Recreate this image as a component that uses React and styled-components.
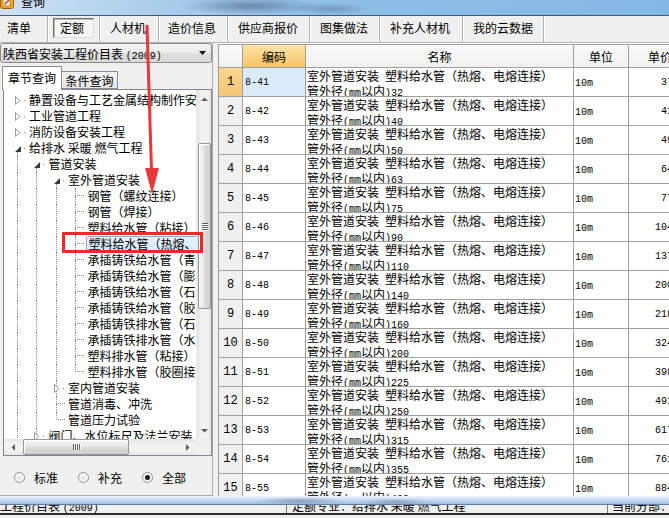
import React from 'react';
import styled, { createGlobalStyle, css } from 'styled-components';

const CJK = '"Noto Sans CJK SC", "Liberation Sans", sans-serif';
const MONO = '"Liberation Mono", "Noto Sans CJK SC", monospace';
const GRID = '#a0a0a0';

const GlobalStyle = createGlobalStyle`
  html, body { margin: 0; padding: 0; }
  body {
    width: 669px;
    height: 518px;
    overflow: hidden;
    background: #f0f0f0;
    font-family: ${CJK};
    font-size: 12px;
    color: #000;
  }
  * { box-sizing: border-box; }
`;

const Window = styled.div`
  position: relative;
  width: 669px;
  height: 518px;
  overflow: hidden;
  display: flex;
  flex-direction: column;
  background: #f0f0f0;
`;

/* title bar (only the lower part is on screen) */
const TitleBar = styled.div`
  flex: none;
  height: 16px;
  border-bottom: 1px solid #3d5b7e;
  display: flex;
  align-items: flex-start;
  gap: 7px;
  overflow: hidden;
  background:
    radial-gradient(ellipse 70px 9px at 250px 6px, rgba(45, 65, 95, .45), rgba(45, 65, 95, 0)),
    radial-gradient(ellipse 40px 6px at 330px 9px, rgba(45, 65, 95, .3), rgba(45, 65, 95, 0)),
    linear-gradient(to right, #cfe2f3 0%, #abcfec 22%, #90bee7 50%, #84b8e5 100%);
`;

const TitleIcon = styled.svg`
  flex: none;
  margin-top: -5px;
`;

const TitleText = styled.span`
  line-height: 12px;
  margin-top: -4px;
  font-size: 12px;
`;

/* main tab strip */
const TabBar = styled.div`
  flex: none;
  height: 27px;
  display: flex;
  border-bottom: 1px solid #b5b5b5;
`;

const TopTab = styled.div`
  flex: none;
  width: ${p => p.$w}px;
  padding: 0 0 3px ${p => p.$pad}px;
  border-right: 1px solid #b3b3b3;
  box-shadow: 1px 0 0 #fff;
  display: flex;
  align-items: center;
  white-space: nowrap;
  font-size: 12px;
`;

const PressedBox = styled.span`
  height: 20px;
  width: 41px;
  padding-left: 6px;
  display: flex;
  align-items: center;
  border: 1px solid;
  border-color: #6f6f6f #dcdcdc #dcdcdc #6f6f6f;
  box-shadow: inset 1px 1px 0 #b9b9b9;
  background: #f6f6f6;
`;

const Main = styled.div`
  flex: none;
  height: 453px;
  display: flex;
`;

/* left side: chapter tree */
const LeftPanel = styled.div`
  flex: none;
  width: 213px;
  border-right: 1px solid #a9a9a9;
  border-bottom: 1px solid #a9a9a9;
  display: flex;
  flex-direction: column;
`;

const Combo = styled.div`
  flex: none;
  height: 20px;
  border: 1px solid #8b8b8b;
  border-radius: 3px;
  background: linear-gradient(#f4f4f4, #ebebeb 50%, #dedede 51%, #d9d9d9);
  display: flex;
  align-items: center;
  justify-content: space-between;
  padding: 0 5px 0 2px;
  white-space: nowrap;
`;

const Ascii = styled.span`
  font-family: "Liberation Mono", monospace;
  font-size: 10px;
`;

const QueryTabs = styled.div`
  flex: none;
  height: 26px;
  display: flex;
  align-items: flex-end;
  padding-left: 2px;
`;

const QueryTab = styled.div`
  position: relative;
  z-index: 1;
  width: ${p => (p.$active ? 60 : 56)}px;
  height: ${p => (p.$active ? 24 : 18)}px;
  margin-bottom: ${p => (p.$active ? -1 : 0)}px;
  border: 1px solid #898c95;
  border-bottom: ${p => (p.$active ? 'none' : '1px solid #898c95')};
  border-left: ${p => (p.$active ? '1px solid #898c95' : 'none')};
  background: ${p => (p.$active ? '#fff' : 'linear-gradient(#f3f3f3, #e5e5e5)')};
  display: flex;
  align-items: center;
  justify-content: center;
  padding-bottom: ${p => (p.$active ? 3 : 0)}px;
  font-size: 12px;
`;

const TreeBox = styled.div`
  flex: none;
  margin-left: 3px;
  width: 209px;
  height: 367px;
  border: 1px solid #828790;
  background: #fff;
  display: grid;
  grid-template-columns: 1fr 15px;
  grid-template-rows: 1fr 16px;
`;

const TreeList = styled.div`
  overflow: hidden;
  padding: 2px 0 0 3.5px;
`;

const TreeRow = styled.div`
  height: 16px;
  display: flex;
  white-space: nowrap;
`;

const Guide = styled.span`
  flex: none;
  width: 19.5px;
  display: grid;
`;

const GuideLine = styled.span`
  grid-area: 1 / 1;
  margin-left: 9px;
  margin-top: ${p => p.$top || 0}px;
  height: ${p => (p.$half ? '8px' : 'auto')};
  width: ${p => (p.$hook ? 9 : 0)}px;
  border-left: 1px dotted #8e8e8e;
  ${p => p.$hook && css`border-bottom: 1px dotted #8e8e8e;`}
`;

const Expander = styled.svg`
  grid-area: 1 / 1;
  align-self: start;
  margin: ${p => (p.$open ? '6px 0 0 7px' : '4px 0 0 7px')};
  background: transparent;
`;

const ExpDot = styled.span`
  grid-area: 1 / 1;
  align-self: start;
  margin: 8px 0 0 16px;
  width: 1px;
  height: 1px;
  background: #8e8e8e;
`;

const TreeText = styled.span`
  line-height: 16px;
  font-size: 12px;
  padding: 0 2px;
  ${p => p.$selected && css`
    line-height: 14px;
    height: 16px;
    background: linear-gradient(#e9f3fd, #d7e8fb);
    border: 1px solid #84acdd;
    border-radius: 2px;
  `}
`;

/* scroll bars */
const VScroll = styled.div`
  display: flex;
  flex-direction: column;
  background: linear-gradient(to right, #e3e3e3, #f2f2f2 30%, #f2f2f2 70%, #e6e6e6);
  border-left: 1px solid #ececec;
`;

const HScroll = styled.div`
  display: flex;
  align-items: stretch;
  background: linear-gradient(#e3e3e3, #f2f2f2 30%, #f2f2f2 70%, #e6e6e6);
`;

const Corner = styled.div`
  background: #f0f0f0;
`;

const ArrowBtn = styled.div`
  flex: none;
  width: ${p => (p.$h ? 17 : 'auto')}px;
  height: ${p => (p.$h ? 'auto' : '17px')};
  display: flex;
  align-items: center;
  justify-content: center;
`;

const Track = styled.div`
  flex: 1;
  display: flex;
  flex-direction: ${p => (p.$h ? 'row' : 'column')};
`;

const Thumb = styled.div`
  flex: none;
  ${p => (p.$h
    ? css`
      margin: 0 0 0 2px;
      width: 106px;
      background: linear-gradient(#f5f5f5, #e9e9e9 45%, #d9d9d9 55%, #cfcfcf);
    `
    : css`
      margin: 36px 0 0 1px;
      height: 166px;
      width: 13px;
      background: linear-gradient(to right, #f5f5f5, #e9e9e9 45%, #d9d9d9 55%, #cfcfcf);
    `)}
  border: 1px solid #979797;
  border-radius: 2px;
  box-shadow: inset 1px 1px 0 #fff;
  display: flex;
  flex-direction: ${p => (p.$h ? 'row' : 'column')};
  align-items: center;
  justify-content: center;
  gap: 1px;
`;

const Grip = styled.span`
  width: ${p => (p.$h ? 1 : 6)}px;
  height: ${p => (p.$h ? 6 : 1)}px;
  background: #5f5f5f;
  box-shadow: ${p => (p.$h ? '1px 0 0 #fff' : '0 1px 0 #fff')};
`;

/* radio row */
const RadioRow = styled.div`
  flex: 1;
  display: flex;
  align-items: center;
  padding: 3px 0 0 14px;
  gap: 20px;
`;

const RadioItem = styled.label`
  display: flex;
  align-items: center;
  gap: 9px;
  font-size: 12px;
`;

const RadioDot = styled.span`
  width: 11px;
  height: 11px;
  border-radius: 50%;
  border: 1px solid #8e8f8f;
  background: radial-gradient(circle, #e7e7e7 0, #f8f8f8 60%, #fff 100%);
  display: flex;
  align-items: center;
  justify-content: center;
  &::after {
    content: '';
    width: 5px;
    height: 5px;
    border-radius: 50%;
    background: ${p => (p.$checked ? '#1b1b1b' : 'transparent')};
  }
`;

/* right side: quota table */
const RightPanel = styled.div`
  flex: 1;
  margin-left: 5px;
  padding-top: 1px;
  overflow: hidden;
  background: #fff;
`;

const Table = styled.div`
  display: grid;
  grid-template-columns: 24px 63px 268px 55px 63px;
  grid-template-rows: 23px;
  grid-auto-rows: 29px;
  width: max-content;
  border-top: 1px solid ${GRID};
  border-left: 1px solid ${GRID};
`;

const Cell = styled.div`
  border-right: 1px solid ${GRID};
  border-bottom: 1px solid ${GRID};
  overflow: hidden;
  white-space: nowrap;
`;

const HeadCell = styled(Cell)`
  display: flex;
  align-items: center;
  justify-content: center;
  font-size: 12px;
  background: ${p => (p.$hot ? 'linear-gradient(#fde2a6, #f6c466)' : 'linear-gradient(#fafafa, #f0f0f0)')};
`;

const NumCell = styled(Cell)`
  display: flex;
  align-items: center;
  justify-content: center;
  font-family: ${MONO};
  font-size: 12px;
  background: ${p => (p.$hot ? 'linear-gradient(#fcd792, #f7c574)' : '#f0f0f0')};
`;

const CodeCell = styled(Cell)`
  display: flex;
  align-items: center;
  padding-left: 2px;
  font-family: ${MONO};
  font-size: 10px;
  background: ${p => (p.$hot ? '#dcebfc' : '#fff')};
`;

const NameCell = styled(Cell)`
  padding: 2px 0 0 1px;
  font-size: 12px;
  line-height: 12px;
`;

const UnitCell = styled(Cell)`
  display: flex;
  align-items: center;
  padding: 3px 0 0 1px;
  font-family: ${MONO};
  font-size: 10px;
`;

const PriceCell = styled(Cell)`
  display: flex;
  align-items: center;
  justify-content: flex-end;
  padding: 0 0 0 0;
  font-family: ${MONO};
  font-size: 10px;
`;

/* status bar */
const StatusBar = styled.div`
  flex: none;
  height: 22px;
  display: flex;
  flex-direction: column;
`;

const StatusStrip = styled.div`
  flex: none;
  height: 9px;
  border-bottom: 1px solid #5d7ea8;
  background:
    radial-gradient(ellipse 45px 4px at 300px 5px, rgba(40, 60, 90, .35), rgba(40, 60, 90, 0)),
    radial-gradient(ellipse 35px 4px at 395px 6px, rgba(40, 60, 90, .3), rgba(40, 60, 90, 0)),
    linear-gradient(#eef5fc, #c9ddf2 45%, #9fc2e8);
`;

const StatusRow = styled.div`
  flex: none;
  height: 10px;
  overflow: hidden;
  display: flex;
  background: #f0f0f0;
  border-bottom: 2px solid #2e2e2e;
`;

const StatusItem = styled.div`
  flex: none;
  width: ${p => p.$w}px;
  padding-left: ${p => p.$pad || 0}px;
  border-right: 1px solid #7a7a7a;
  white-space: nowrap;
  line-height: 12px;
  font-size: 12px;
  & > span { display: block; margin-top: -5px; }
`;

/* red annotations drawn over the window */
const Overlay = styled.svg`
  position: absolute;
  left: 0;
  top: 0;
  pointer-events: none;
`;

const topTabs = [
  { label: '清单', w: 48, pad: 7 },
  { label: '定额', w: 52, pad: 5, active: true },
  { label: '人材机', w: 59, pad: 10 },
  { label: '造价信息', w: 69, pad: 9 },
  { label: '供应商报价', w: 82, pad: 10 },
  { label: '图集做法', w: 70, pad: 10 },
  { label: '补充人材机', w: 83, pad: 10 },
  { label: '我的云数据', w: 81, pad: 10 },
];

const leaf3 = [
  '钢管（螺纹连接）',
  '钢管（焊接）',
  '塑料给水管（粘接）',
  '塑料给水管（热熔、电熔连接）',
  '承插铸铁给水管（青铅接口）',
  '承插铸铁给水管（膨胀水泥接口）',
  '承插铸铁给水管（石棉水泥接口）',
  '承插铸铁给水管（胶圈接口）',
  '承插铸铁排水管（石棉水泥接口）',
  '承插铸铁排水管（水泥接口）',
  '塑料排水管（粘接）',
  '塑料排水管（胶圈接口）',
];

const treeItems = [
  { text: '静置设备与工艺金属结构制作安装工程', guides: [], node: 'closed' },
  { text: '工业管道工程', guides: [], node: 'closed' },
  { text: '消防设备安装工程', guides: [], node: 'closed' },
  { text: '给排水 采暖 燃气工程', guides: [], node: 'open', more: true },
  { text: '管道安装', guides: [1], node: 'open', more: true },
  { text: '室外管道安装', guides: [1, 1], node: 'open', more: true },
  ...leaf3.map((text, i) => ({
    text,
    guides: [1, 1, 1],
    node: 'leaf',
    more: i < leaf3.length - 1,
    selected: i === 3,
  })),
  { text: '室内管道安装', guides: [1, 1], node: 'closed', more: true },
  { text: '管道消毒、冲洗', guides: [1, 1], node: 'leaf', more: true },
  { text: '管道压力试验', guides: [1, 1], node: 'leaf', more: false },
  { text: '阀门、水位标尺及法兰安装', guides: [1], node: 'closed', more: true },
];

const sizes = [32, 40, 50, 63, 75, 90, 110, 140, 160, 200, 225, 250, 315, 355, 400];
const prices = ['377.5', '418.2', '494.6', '643.8', '778.1', '1042.3', '1375.9', '2003.4',
  '2186.5', '3241.0', '3980.6', '4912.3', '6175.2', '7612.4', '8847.9'];

function TreeNode({ item }) {
  return (
    <TreeRow>
      {item.guides.map((g, i) => (
        <Guide key={i}>{g ? <GuideLine /> : null}</Guide>
      ))}
      <Guide>
        {item.node === 'leaf' && (
          <>
            <GuideLine $half $hook />
            {item.more && <GuideLine $top={8} />}
          </>
        )}
        {item.node === 'open' && (
          <>
            {item.more && <GuideLine $top={12} />}
            <Expander $open width="6" height="6" viewBox="0 0 6 6">
              <path d="M6 0 L6 6 L0 6 Z" fill="#3a3a3a" />
            </Expander>
            <ExpDot />
          </>
        )}
        {item.node === 'closed' && (
          <>
            {item.more && item.guides.length > 0 && <GuideLine />}
            <Expander width="6" height="9" viewBox="0 0 6 9">
              <path d="M0.5 0.5 L5 4.5 L0.5 8.5 Z" fill="#fff" stroke="#9a9a9a" strokeWidth="1" />
            </Expander>
            <ExpDot />
          </>
        )}
      </Guide>
      <TreeText $selected={item.selected}>{item.text}</TreeText>
    </TreeRow>
  );
}

function ArrowGlyph({ dir }) {
  const paths = {
    up: 'M0 4 L3.5 0.5 L7 4 Z',
    down: 'M0 0 L3.5 3.5 L7 0 Z',
    left: 'M4 0 L0.5 3.5 L4 7 Z',
    right: 'M0 0 L3.5 3.5 L0 7 Z',
  };
  const vertical = dir === 'up' || dir === 'down';
  return (
    <svg width={vertical ? 7 : 4} height={vertical ? 4 : 7} viewBox={vertical ? '0 0 7 4' : '0 0 4 7'}>
      <path d={paths[dir]} fill="#606060" />
    </svg>
  );
}

export default function App() {
  return (
    <>
      <GlobalStyle />
      <Window>
        <TitleBar>
          <TitleIcon width="14" height="14" viewBox="0 0 14 14">
            <rect x="0.5" y="0.5" width="13" height="13" rx="2" fill="#f4a623" stroke="#a0600c" />
            <rect x="3" y="3" width="7" height="8" fill="#fff8e0" stroke="#b7791f" strokeWidth="0.8" />
            <path d="M4.5 9.5 L10.5 3.5" stroke="#c0392b" strokeWidth="1.4" />
          </TitleIcon>
          <TitleText>查询</TitleText>
        </TitleBar>

        <TabBar>
          {topTabs.map(t => (
            <TopTab key={t.label} $w={t.w} $pad={t.pad}>
              {t.active ? <PressedBox>{t.label}</PressedBox> : t.label}
            </TopTab>
          ))}
        </TabBar>

        <Main>
          <LeftPanel>
            <Combo>
              <span>陕西省安装工程价目表 <Ascii>(2009)</Ascii></span>
              <svg width="7" height="4" viewBox="0 0 7 4">
                <path d="M0 0 L7 0 L3.5 4 Z" fill="#111" />
              </svg>
            </Combo>
            <QueryTabs>
              <QueryTab $active>章节查询</QueryTab>
              <QueryTab>条件查询</QueryTab>
            </QueryTabs>
            <TreeBox>
              <TreeList>
                {treeItems.map(item => (
                  <TreeNode key={item.text} item={item} />
                ))}
              </TreeList>
              <VScroll>
                <ArrowBtn><ArrowGlyph dir="up" /></ArrowBtn>
                <Track>
                  <Thumb>
                    <Grip /><Grip /><Grip /><Grip />
                  </Thumb>
                </Track>
                <ArrowBtn><ArrowGlyph dir="down" /></ArrowBtn>
              </VScroll>
              <HScroll>
                <ArrowBtn $h><ArrowGlyph dir="left" /></ArrowBtn>
                <Track $h>
                  <Thumb $h>
                    <Grip $h /><Grip $h /><Grip $h /><Grip $h />
                  </Thumb>
                </Track>
                <ArrowBtn $h><ArrowGlyph dir="right" /></ArrowBtn>
              </HScroll>
              <Corner />
            </TreeBox>
            <RadioRow>
              <RadioItem><RadioDot />标准</RadioItem>
              <RadioItem><RadioDot />补充</RadioItem>
              <RadioItem><RadioDot $checked />全部</RadioItem>
            </RadioRow>
          </LeftPanel>

          <RightPanel>
            <Table>
              <HeadCell />
              <HeadCell $hot>编码</HeadCell>
              <HeadCell>名称</HeadCell>
              <HeadCell>单位</HeadCell>
              <HeadCell>单价</HeadCell>
              {sizes.map((size, i) => (
                <React.Fragment key={size}>
                  <NumCell $hot={i === 0}>{i + 1}</NumCell>
                  <CodeCell $hot={i === 0}>8-{41 + i}</CodeCell>
                  <NameCell>
                    室外管道安装<Ascii> </Ascii>塑料给水管（热熔、电熔连接）
                    <br />
                    管外径<Ascii>(mm</Ascii>以内<Ascii>){size}</Ascii>
                  </NameCell>
                  <UnitCell>10m</UnitCell>
                  <PriceCell>{prices[i]}</PriceCell>
                </React.Fragment>
              ))}
            </Table>
          </RightPanel>
        </Main>

        <StatusBar>
          <StatusStrip />
          <StatusRow>
            <StatusItem $w={287}><span>工程价目表 <Ascii>(2009)</Ascii></span></StatusItem>
            <StatusItem $w={321} $pad={5}><span>定额专业：给排水 采暖 燃气工程</span></StatusItem>
            <StatusItem $w={70} $pad={4}><span>当前分部：</span></StatusItem>
          </StatusRow>
        </StatusBar>

        <Overlay width="669" height="518" viewBox="0 0 669 518">
          <line x1="147" y1="25" x2="151.5" y2="172" stroke="#e8383a" strokeWidth="3" />
          <polygon points="145,168 159,168 152,194" fill="#e8383a" />
          <rect x="63.5" y="233.5" width="138" height="18" fill="none" stroke="#f0282a" strokeWidth="3" />
        </Overlay>
      </Window>
    </>
  );
}
